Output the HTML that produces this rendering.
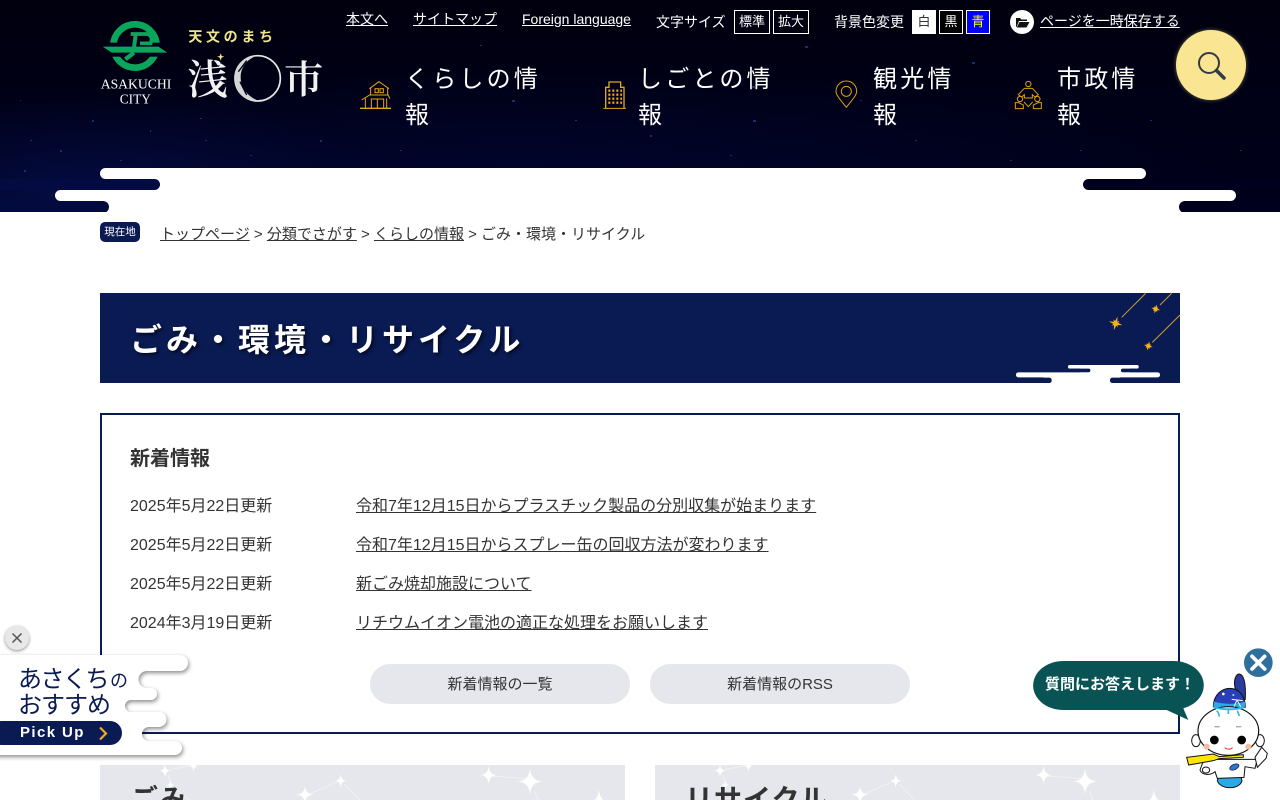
<!DOCTYPE html>
<html lang="ja">
<head>
<meta charset="utf-8">
<title>ごみ・環境・リサイクル</title>
<style>
html,body{margin:0;padding:0;background:#fff;}
body{width:1280px;height:800px;overflow:hidden;position:relative;font-family:"Liberation Sans","Noto Sans CJK JP",sans-serif;color:#333;font-size:16px;}
a{color:inherit;text-decoration:underline;}
.a{position:absolute;white-space:nowrap;}
svg{position:absolute;display:block;overflow:visible;}
#hd{position:absolute;left:0;top:0;width:1280px;height:212px;overflow:hidden;
background:radial-gradient(ellipse 330px 110px at 90px 205px,#040e46 0%,rgba(3,10,60,.55) 55%,rgba(0,0,30,0) 100%),radial-gradient(ellipse 720px 100px at 520px 170px,#01052c 0%,rgba(1,4,38,.5) 60%,rgba(0,0,20,0) 100%),linear-gradient(#00000e 0%,#000016 45%,#00001a 100%);}
.w{position:absolute;background:#fff;}
.d{position:absolute;}
.top{color:#fff;font-size:14px;line-height:20px;}
.nav{position:absolute;color:#fff;font-size:24px;line-height:36px;letter-spacing:3.2px;white-space:normal;}
.bx{position:absolute;top:10px;height:22px;line-height:22px;border:1px solid #fff;text-align:center;color:#fff;font-size:13px;box-sizing:content-box;}
.row{font-size:16px;line-height:24px;color:#333;}
.btn{position:absolute;top:664px;height:40px;width:260px;border-radius:20px;background:#e6e7ec;text-align:center;line-height:42px;font-size:15px;color:#333;}
.panel{position:absolute;top:765px;width:525px;height:35px;background:#e6e7ec;overflow:hidden;}
.pt{position:absolute;left:30px;top:15px;font-size:28px;line-height:40px;font-weight:bold;color:#333;letter-spacing:1px;white-space:nowrap;}
</style>
</head>
<body>

<div id="hd">
  <svg width="1280" height="212" style="left:0;top:0" fill="#14306e">
    <rect x="92" y="120" width="2" height="2"/><rect x="205" y="140" width="2" height="1"/><rect x="60" y="150" width="2" height="2"/><rect x="47" y="188" width="2" height="2"/><rect x="30" y="140" width="2" height="1"/><rect x="150" y="130" width="1" height="2"/><rect x="250" y="155" width="2" height="1"/><rect x="320" y="140" width="2" height="2"/><rect x="400" y="150" width="2" height="1"/><rect x="512" y="100" width="3" height="2"/><rect x="575" y="120" width="2" height="1"/><rect x="650" y="135" width="2" height="2"/><rect x="752" y="86" width="3" height="2"/><rect x="753" y="120" width="3" height="2"/><rect x="805" y="46" width="3" height="2"/><rect x="860" y="100" width="2" height="1"/><rect x="972" y="62" width="3" height="2"/><rect x="915" y="140" width="2" height="1"/><rect x="1150" y="120" width="2" height="1"/><rect x="1240" y="150" width="2" height="1"/><rect x="1080" y="150" width="2" height="1"/><rect x="730" y="155" width="2" height="1"/><rect x="480" y="45" width="2" height="1"/><rect x="20" y="100" width="1" height="1"/><rect x="120" y="160" width="2" height="1"/><rect x="1010" y="160" width="2" height="1"/><rect x="24" y="170" width="2" height="2"/><rect x="200" y="118" width="2" height="1"/>
  </svg>
  <!-- torn edge -->
  <div class="w" style="left:100px;top:168px;width:1046px;height:11px;border-radius:6px"></div>
  <div class="w" style="left:150px;top:178px;width:943px;height:12px"></div>
  <div class="d" style="left:-20px;top:179px;width:180px;height:11px;border-radius:6px;background:#030b42"></div>
  <div class="d" style="left:1083px;top:179px;width:220px;height:11px;border-radius:6px;background:#00001e"></div>
  <div class="w" style="left:55px;top:190px;width:1181px;height:11px;border-radius:6px"></div>
  <div class="w" style="left:100px;top:200px;width:1090px;height:12px"></div>
  <div class="d" style="left:-20px;top:201px;width:129px;height:12px;border-radius:6px;background:#030a3e"></div>
  <div class="d" style="left:1179px;top:201px;width:130px;height:12px;border-radius:6px;background:#00001e"></div>
</div>

<!-- logo -->
<svg style="left:90px;top:0" width="300" height="130" viewBox="0 0 900 390">
  <circle cx="135" cy="138" r="65" fill="none" stroke="#0ca55c" stroke-width="20"/>
  <rect x="50" y="128" width="170" height="42" fill="#00001c"/>
  <path d="M38 140H205L232 158H65Z" fill="#0ca55c"/>
  <path d="M122 102H172Q190 108 182 130H150" fill="none" stroke="#0ca55c" stroke-width="11"/>
  <path d="M138 98L132 142" stroke="#0ca55c" stroke-width="12" fill="none"/>
  <path d="M132 158L106 178" stroke="#0ca55c" stroke-width="13" fill="none"/>
  <text x="138" y="265" text-anchor="middle" font-family="Liberation Serif,serif" font-size="41" fill="#fff">ASAKUCHI</text>
  <text x="136" y="310" text-anchor="middle" font-family="Liberation Serif,serif" font-size="40" fill="#fff">CITY</text>
  <text x="295" y="124" font-family="Noto Sans CJK JP,sans-serif" font-weight="700" font-size="42" letter-spacing="11" fill="#efe58a">天文のまち</text>
  <text x="292" y="282" font-family="Noto Serif CJK SC,serif" font-weight="600" font-size="122" fill="#f2f2f2">浅</text>
  <text x="582" y="280" font-family="Noto Serif CJK SC,serif" font-weight="600" font-size="118" fill="#f2f2f2">市</text>
  <path d="M392 160l3 8 8 2-8 3-3 9-3-9-8-3 8-2z" fill="#efe58a"/>
  <circle cx="503" cy="235" r="68" fill="none" stroke="#e8e8e8" stroke-width="5"/>
  <path d="M500 167C455 170 430 205 433 240C436 280 465 305 510 304C475 292 452 265 452 232C452 200 472 178 500 167Z" fill="#d5d5d5"/>
  <path d="M470 182L445 215M450 245L470 285" stroke="#00001e" stroke-width="4" fill="none"/>
</svg>

<!-- top links -->
<div class="a top" style="left:346px;top:9px"><a>本文へ</a></div>
<div class="a top" style="left:413px;top:9px"><a>サイトマップ</a></div>
<div class="a top" style="left:522px;top:9px"><a>Foreign language</a></div>
<div class="a top" style="left:656px;top:12px">文字サイズ</div>
<div class="bx" style="left:734px;width:34px">標準</div>
<div class="bx" style="left:773px;width:34px">拡大</div>
<div class="a top" style="left:834px;top:12px">背景色変更</div>
<div class="bx" style="left:912px;width:22px;background:#fff;color:#333">白</div>
<div class="bx" style="left:939px;width:22px;background:#000;color:#fff">黒</div>
<div class="bx" style="left:966px;width:22px;background:#00f;color:#ff0">青</div>
<svg style="left:1010px;top:10px" width="24" height="24" viewBox="0 0 24 24">
  <circle cx="12" cy="12" r="12" fill="#fff"/>
  <path d="M6 17V8h4l1.500 1.500H17V11H9L6.500 17z" fill="#111"/>
  <path d="M9.500 12H19.500L16.500 17.500H6.800z" fill="#111"/>
</svg>
<div class="a top" style="left:1040px;top:11px"><a>ページを一時保存する</a></div>

<!-- nav -->
<svg style="left:340px;top:0" width="480" height="135" viewBox="0 0 1440 405" fill="none" stroke="#e5a713" stroke-width="3">
  <path d="M60 325H153" stroke-width="4"/>
  <path d="M88 266L117 245L147 266M92 263V285H143V263"/>
  <rect x="105" y="266" width="10" height="12"/><rect x="120" y="266" width="10" height="12"/>
  <path d="M65 300L92 283M143 283L150 296M76 295V325M140 295V325M94 325V297H131V325M112 297V325"/>
  <path d="M790 325H858" stroke-width="3"/>
  <path d="M797 325V262H807V246H842V262H852V325" stroke-width="4"/>
  <path d="M805 272h6M817 272h6M829 272h6M841 272h5M805 284h6M817 284h6M829 284h6M841 284h5M805 296h6M817 296h6M829 296h6M841 296h5M805 308h6M817 308h6M829 308h6M841 308h5" stroke-width="7"/>
</svg>
<svg style="left:820px;top:0" width="460" height="135" viewBox="0 0 1380 405" fill="none" stroke="#e0a010" stroke-width="3">
  <path d="M79 322C60 298 48 285 48 274A31 31 0 0 1 110 274C110 285 98 298 79 322Z"/>
  <circle cx="79" cy="274" r="15"/>
  <circle cx="625" cy="252" r="8"/>
  <path d="M613 265H637L655 284L645 291L637 284V294H613V284L605 291L595 284Z"/>
  <circle cx="600" cy="297" r="8"/><circle cx="652" cy="297" r="8"/>
  <path d="M586 326V308H596L610 315V326ZM664 326V308H654L640 315V326Z"/>
  <path d="M612 306L625 320L638 306"/>
</svg>
<div class="nav" style="left:405px;top:62px;width:150px">くらしの情報</div>
<div class="nav" style="left:638px;top:62px;width:150px">しごとの情報</div>
<div class="nav" style="left:873px;top:62px;width:100px">観光情報</div>
<div class="nav" style="left:1057px;top:62px;width:100px">市政情報</div>

<!-- search -->
<div class="a" style="left:1176px;top:30px;width:70px;height:70px;border-radius:50%;background:#f9e592;box-shadow:0 0 3px 1px rgba(130,130,90,.5)"></div>
<svg style="left:1196px;top:50px" width="30" height="30" viewBox="0 0 30 30" fill="none" stroke="#333a44">
  <circle cx="13" cy="13" r="10" stroke-width="2"/>
  <path d="M20.500 20.500L28 28" stroke-width="3.500" stroke-linecap="round"/>
</svg>

<!-- breadcrumb -->
<div class="a" style="left:100px;top:222px;width:40px;height:20px;background:#0a1a52;border-radius:5px;color:#fff;font-size:10.500px;line-height:20px;text-align:center">現在地</div>
<div class="a" style="left:160px;top:224px;font-size:15px;line-height:22px;color:#333"><a>トップページ</a> &gt; <a>分類でさがす</a> &gt; <a>くらしの情報</a> &gt; ごみ・環境・リサイクル</div>

<!-- title -->
<div class="a" style="left:100px;top:293px;width:1080px;height:90px;background:#0a1a52"></div>
<div class="a" style="left:130px;top:317px;font-size:32px;line-height:46px;font-weight:bold;color:#fff;letter-spacing:4px;text-shadow:2px 2px 3px rgba(0,0,0,.6)">ごみ・環境・リサイクル</div>
<svg style="left:980px;top:285px" width="210" height="105" viewBox="0 0 630 315">
  <path d="M425 97L497 25M540 60L575 25M517 172L600 90" stroke="#c8a030" stroke-width="3" fill="none"/>
  <g fill="#f4b21a">
    <path transform="translate(407,115) rotate(15)" d="M0-21L4-4L21 0L4 4L0 21L-4 4L-21 0L-4-4Z"/>
    <path transform="translate(407,115) rotate(60) scale(.65)" d="M0-21L5-5L21 0L5 5L0 21L-5 5L-21 0L-5-5Z"/>
    <path transform="translate(527,72) rotate(15) scale(.65)" d="M0-21L5-5L21 0L5 5L0 21L-5 5L-21 0L-5-5Z"/>
    <path transform="translate(527,72) rotate(60) scale(.45)" d="M0-21L7-7L21 0L7 7L0 21L-7 7L-21 0L-7-7Z"/>
    <path transform="translate(505,183) rotate(15) scale(.65)" d="M0-21L5-5L21 0L5 5L0 21L-5 5L-21 0L-5-5Z"/>
    <path transform="translate(505,183) rotate(60) scale(.45)" d="M0-21L7-7L21 0L7 7L0 21L-7 7L-21 0L-7-7Z"/>
  </g>
  <g fill="#fff">
    <rect x="264" y="240" width="212" height="11" rx="5"/>
    <rect x="300" y="245" width="150" height="25"/>
    <rect x="190" y="270" width="230" height="24"/>
  </g>
  <rect x="240" y="251" width="91" height="11" rx="5" fill="#0a1a52"/>
  <rect x="423" y="251" width="91" height="11" rx="5" fill="#0a1a52"/>
  <rect x="90" y="278" width="125" height="16" rx="7" fill="#0a1a52"/>
  <rect x="390" y="278" width="160" height="16" rx="7" fill="#0a1a52"/>
  <rect x="108" y="262" width="432" height="15" rx="7" fill="#fff"/>
</svg>

<!-- main box -->
<div class="a" style="left:100px;top:413px;width:1080px;height:321px;border:2px solid #0a1a52;box-sizing:border-box"></div>
<div class="a" style="left:130px;top:444px;font-size:20px;line-height:30px;font-weight:bold;color:#333">新着情報</div>
<div class="a row" style="left:130px;top:495px">2025年5月22日更新</div>
<div class="a row" style="left:356px;top:495px"><a>令和7年12月15日からプラスチック製品の分別収集が始まります</a></div>
<div class="a row" style="left:130px;top:534px">2025年5月22日更新</div>
<div class="a row" style="left:356px;top:534px"><a>令和7年12月15日からスプレー缶の回収方法が変わります</a></div>
<div class="a row" style="left:130px;top:573px">2025年5月22日更新</div>
<div class="a row" style="left:356px;top:573px"><a>新ごみ焼却施設について</a></div>
<div class="a row" style="left:130px;top:612px">2024年3月19日更新</div>
<div class="a row" style="left:356px;top:612px"><a>リチウムイオン電池の適正な処理をお願いします</a></div>
<div class="btn" style="left:370px">新着情報の一覧</div>
<div class="btn" style="left:650px">新着情報のRSS</div>

<!-- panels -->
<div class="panel" style="left:100px">
  <svg width="525" height="35" viewBox="0 0 1470 98" style="left:0;top:0">
    <g transform="translate(-28,-42)" fill="#fff" stroke="none">
      <path d="M225 55L288 42M218 70L228 100M235 105L290 150M610 125L695 88M712 95L765 150M1125 73L1225 80M1245 115L1258 150" stroke="#f5f5f8" stroke-width="2" fill="none"/>
      <path d="M210 40Q212 58 228 58Q212 58 210 76Q208 58 192 58Q208 58 210 40Z"/>
      <path d="M225 84Q226 98 238 98Q226 98 225 112Q224 98 212 98Q224 98 225 84Z"/>
      <path d="M290 30Q291 45 303 45Q291 45 290 60Q289 45 277 45Q289 45 290 30Z"/>
      <path d="M602 100Q604 125 628 125Q604 125 602 150Q600 125 576 125Q600 125 602 100Z"/>
      <path d="M702 66Q703 86 720 86Q703 86 702 106Q701 86 684 86Q701 86 702 66Z"/>
      <path d="M1116 44Q1118 70 1142 70Q1118 70 1116 96Q1114 70 1090 70Q1114 70 1116 44Z"/>
      <path d="M1232 50Q1234 88 1270 88Q1234 88 1232 126Q1230 88 1194 88Q1230 88 1232 50Z"/>
      <path d="M1425 110Q1427 148 1463 148Q1427 148 1425 186Q1423 148 1387 148Q1423 148 1425 110Z"/>
    </g>
  </svg>
  <div class="pt">ごみ</div>
</div>
<div class="panel" style="left:655px">
  <svg width="525" height="35" viewBox="0 0 1470 98" style="left:0;top:0">
    <g transform="translate(-28,-42)" fill="#fff" stroke="none">
      <path d="M225 55L288 42M218 70L228 100M235 105L290 150M610 125L695 88M712 95L765 150M1125 73L1225 80M1245 115L1258 150" stroke="#f5f5f8" stroke-width="2" fill="none"/>
      <path d="M210 40Q212 58 228 58Q212 58 210 76Q208 58 192 58Q208 58 210 40Z"/>
      <path d="M225 84Q226 98 238 98Q226 98 225 112Q224 98 212 98Q224 98 225 84Z"/>
      <path d="M290 30Q291 45 303 45Q291 45 290 60Q289 45 277 45Q289 45 290 30Z"/>
      <path d="M602 100Q604 125 628 125Q604 125 602 150Q600 125 576 125Q600 125 602 100Z"/>
      <path d="M702 66Q703 86 720 86Q703 86 702 106Q701 86 684 86Q701 86 702 66Z"/>
      <path d="M1116 44Q1118 70 1142 70Q1118 70 1116 96Q1114 70 1090 70Q1114 70 1116 44Z"/>
      <path d="M1232 50Q1234 88 1270 88Q1234 88 1232 126Q1230 88 1194 88Q1230 88 1232 50Z"/>
      <path d="M1425 110Q1427 148 1463 148Q1427 148 1425 186Q1423 148 1387 148Q1423 148 1425 110Z"/>
    </g>
  </svg>
  <div class="pt">リサイクル</div>
</div>

<!-- left popup -->
<svg style="left:0;top:0;filter:drop-shadow(1px 2px 2px rgba(0,0,0,.45))" width="1280" height="800">
  <path d="M-5 655H180A8 8 0 0 1 180 671H147A8.500 8.500 0 0 0 147 688H151A6 6 0 0 1 151 700H131A6 6 0 0 0 131 712H159A7.500 7.500 0 0 1 159 727H149A7 7 0 0 0 149 741H175A7 7 0 0 1 175 755H-5Z" fill="#fff"/>
</svg>
<div class="a" style="left:18px;top:662px;font-size:24px;line-height:36px;color:#0a1a52;letter-spacing:-1.500px">あさくち<span style="font-size:18px;margin-left:2px;letter-spacing:0">の</span></div>
<div class="a" style="left:18px;top:688px;font-size:24px;line-height:36px;color:#0a1a52;letter-spacing:-1px">おすすめ</div>
<div class="a" style="left:-10px;top:721px;width:132px;height:24px;background:#0a1a52;border-radius:12px"></div>
<div class="a" style="left:20px;top:721px;font-size:15px;line-height:24px;font-weight:bold;color:#fff;letter-spacing:1.400px">Pick Up</div>
<svg style="left:97px;top:726px" width="12" height="15" viewBox="0 0 12 15"><path d="M3 1.500L9 7.500L3 13.500" fill="none" stroke="#eeaa22" stroke-width="2.200"/></svg>
<div class="a" style="left:5px;top:626px;width:24px;height:24px;border-radius:50%;background:#e8e8e8;box-shadow:0 1px 3px rgba(0,0,0,.45)"></div>
<svg style="left:5px;top:626px" width="24" height="24" viewBox="0 0 24 24"><path d="M7.500 7.500L16.500 16.500M16.500 7.500L7.500 16.500" stroke="#555" stroke-width="1.500"/></svg>

<!-- chatbot -->
<svg style="left:1020px;top:640px" width="260" height="160" viewBox="0 0 780 480">
  <path d="M130 63H455A90 73 0 0 1 490 205L505 240L440 210H130A90 73 0 0 1 130 63Z" fill="#0a5354"/>
  <circle cx="715" cy="68" r="43" fill="#2f6f9b"/>
  <path d="M696 49L734 87M734 49L696 87" stroke="#fff" stroke-width="11" stroke-linecap="round"/>
</svg>
<div class="a" style="left:1045px;top:674px;font-size:15px;line-height:22px;font-weight:bold;color:#fff">質問にお答えします！</div>
<svg style="left:1180px;top:670px" width="95" height="125" viewBox="0 0 285 375">
  <path d="M165 52C160 30 168 12 178 12C192 14 198 40 196 88L170 88Z" fill="#2a3a9f" stroke="#111" stroke-width="3"/>
  <path d="M100 110C100 75 125 55 150 55C178 55 196 80 196 112Q150 118 100 110Z" fill="#2a3fb5" stroke="#111" stroke-width="3"/>
  <path d="M102 95Q150 108 195 95L196 112Q150 118 100 110Z" fill="#29a9e8"/>
  <circle cx="130" cy="72" r="4" fill="#fff"/><circle cx="160" cy="75" r="3" fill="#7fe"/>
  <path d="M155 88L188 92M170 92L162 110M172 92L182 110" stroke="#fff" stroke-width="3"/>
  <ellipse cx="48" cy="212" rx="13" ry="18" fill="#fff" stroke="#111" stroke-width="3"/>
  <ellipse cx="240" cy="212" rx="13" ry="18" fill="#fff" stroke="#111" stroke-width="3"/>
  <path d="M112 332C120 360 180 360 186 332L180 310H118Z" fill="#29a9e8" stroke="#111" stroke-width="3"/>
  <path d="M72 268L60 300C65 315 90 318 105 305L112 325L192 322L195 290L225 295L232 268Z" fill="#fff" stroke="#111" stroke-width="3"/>
  <path d="M225 262L245 232L262 250L258 265L232 292Z" fill="#fff" stroke="#111" stroke-width="3"/>
  <ellipse cx="78" cy="300" rx="11" ry="9" fill="#fff" stroke="#111" stroke-width="3"/>
  <ellipse cx="145" cy="183" rx="91" ry="73" fill="#fff" stroke="#111" stroke-width="3.500"/>
  <path d="M110 122Q116 128 118 140M145 115V132M172 122L178 138" stroke="#34b5ea" stroke-width="5" fill="none"/>
  <path d="M100 112C135 120 165 120 192 112" stroke="#34b5ea" stroke-width="6" fill="none"/>
  <path d="M103 170h16M168 170h16" stroke="#aaa" stroke-width="4"/>
  <circle cx="103" cy="210" r="13" fill="#000"/><circle cx="185" cy="210" r="13" fill="#000"/>
  <circle cx="80" cy="230" r="9" fill="#f7b9a0"/><circle cx="205" cy="230" r="9" fill="#f7b9a0"/>
  <path d="M134 233Q146 242 158 233" fill="none" stroke="#e33" stroke-width="3"/>
  <path d="M20 262L100 252L118 260L190 254L190 262L118 266L100 272L26 285Z" fill="#ffe600" stroke="#111" stroke-width="3"/>
  <ellipse cx="163" cy="291" rx="15" ry="8" fill="#2a78d0" stroke="#111" stroke-width="2" transform="rotate(-25 163 291)"/>
</svg>

</body>
</html>
